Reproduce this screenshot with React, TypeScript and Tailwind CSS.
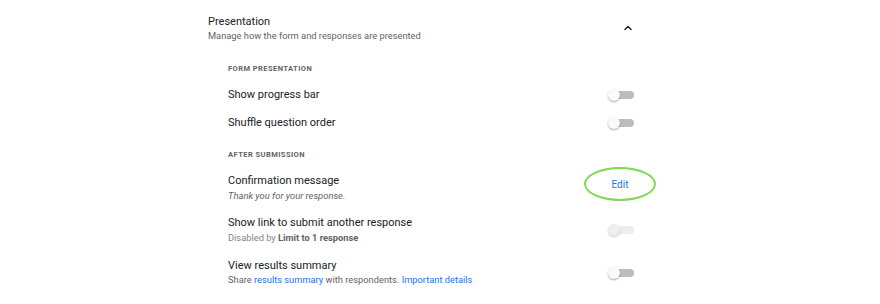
import { ChevronUp } from 'lucide-react'

function Toggle({ disabled }: { disabled?: boolean }) {
	return (
		<div className="relative w-[26px] h-[14px] flex items-center">
			<div
				className={
					disabled
						? 'absolute left-[3px] w-[23px] h-[8px] rounded-full bg-[#ececec]'
						: 'absolute left-[3px] w-[23px] h-[8px] rounded-full bg-[#bdbdbd]'
				}
			/>
			<div
				className={
					disabled
						? 'absolute left-0 w-[12px] h-[12px] rounded-full bg-[#eeeeee] shadow-[0_1px_2px_rgba(0,0,0,0.2)]'
						: 'absolute left-0 w-[12px] h-[12px] rounded-full bg-[#fafafa] shadow-[0_1px_2px_rgba(0,0,0,0.35)]'
				}
			/>
		</div>
	)
}

export default function App() {
	return (
		<div className="w-[880px] h-[304px] bg-white font-['Roboto',sans-serif] overflow-hidden">
			<div className="ml-[208px] w-[426px] pt-[14px]">
				<div className="flex justify-between">
					<div>
						<div className="text-[11px] leading-[15px] text-[#202124]">Presentation</div>
						<div className="text-[9.3px] leading-[14px] text-[#5f6368]">
							Manage how the form and responses are presented
						</div>
					</div>
					<ChevronUp size={12} strokeWidth={3} className="mt-[8px] text-[#202124]" />
				</div>

				<div className="ml-[20px] mt-[20px]">
					<div className="text-[7.5px] leading-[12px] font-bold tracking-[0.06em] text-[#5f6368]">
						FORM PRESENTATION
					</div>

					<div className="flex justify-between items-center h-[16px] mt-[12px]">
						<span className="text-[11px] text-[#202124]">Show progress bar</span>
						<Toggle />
					</div>
					<div className="flex justify-between items-center h-[16px] mt-[12px]">
						<span className="text-[11px] text-[#202124]">Shuffle question order</span>
						<Toggle />
					</div>

					<div className="text-[7.5px] leading-[12px] font-bold tracking-[0.06em] text-[#5f6368] mt-[18px]">
						AFTER SUBMISSION
					</div>

					<div className="flex justify-between items-start mt-[12px]">
						<div>
							<div className="text-[11px] leading-[16px] text-[#202124]">Confirmation message</div>
							<div className="text-[9.4px] leading-[13px] italic text-[#5f6368]">
								Thank you for your response.
							</div>
						</div>
						<div className="relative w-[72px] h-[34px] mt-[-6px] mr-[-22px] flex items-center justify-center">
							<div className="absolute inset-0 rounded-[50%] border-2 border-[#7ed957]" />
							<span className="text-[10px] text-[#1a73e8]">Edit</span>
						</div>
					</div>

					<div className="flex justify-between items-center mt-[13px]">
						<div>
							<div className="text-[11px] leading-[16px] text-[#202124]">
								Show link to submit another response
							</div>
							<div className="text-[9.3px] leading-[14px] text-[#80868b]">
								Disabled by <span className="font-bold text-[#5f6368]">Limit to 1 response</span>
							</div>
						</div>
						<Toggle disabled />
					</div>

					<div className="flex justify-between items-center mt-[13px]">
						<div>
							<div className="text-[11px] leading-[16px] text-[#202124]">View results summary</div>
							<div className="text-[9.3px] leading-[14px] mt-[-1px] text-[#5f6368]">
								Share <span className="text-[#1a73e8]">results summary</span> with respondents.{' '}
								<span className="text-[#1a73e8]">Important details</span>
							</div>
						</div>
						<Toggle />
					</div>
				</div>
			</div>
		</div>
	)
}
